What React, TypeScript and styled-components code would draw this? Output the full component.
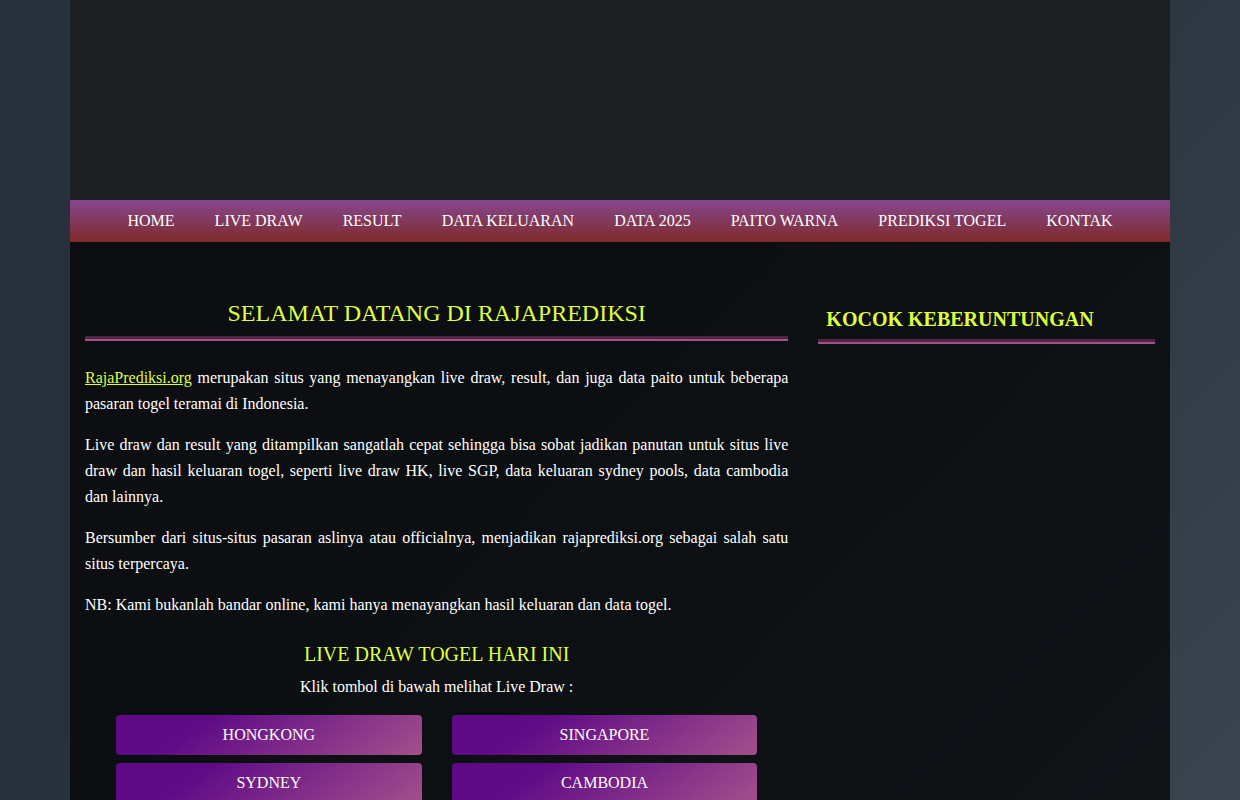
import React from "react";
import styled, { createGlobalStyle } from "styled-components";

const GlobalStyle = createGlobalStyle`
  * {
    box-sizing: border-box;
  }
  body {
    margin: 0;
    color: #fff;
    font: 16px/26px "Liberation Serif", "Times New Roman", serif;
    background: #28313b linear-gradient(315deg, #485461 0%, #28313b 74%) 0 0 / 100% 1800px no-repeat;
  }
`;

const Container = styled.div`
  max-width: 1100px;
  min-height: 100vh;
  margin: 0 auto;
  background: rgba(0, 0, 0, 0.7);
`;

const Banner = styled.header`
  height: 200px;
  background: #1b1f22;
`;

const Nav = styled.nav`
  background: linear-gradient(to bottom, #86478f, #7f2a28);
`;

const Menu = styled.ul`
  display: flex;
  flex-wrap: wrap;
  justify-content: center;
  margin: 0;
  padding: 0;
  list-style: none;
`;

const MenuLink = styled.a`
  display: block;
  padding: 8px 20px;
  color: #fff;
  text-decoration: none;
`;

const Columns = styled.div`
  display: grid;
  grid-template-columns: 2fr 1fr;

  @media (max-width: 767px) {
    grid-template-columns: 1fr;
  }
`;

const Main = styled.main`
  padding: 56px 15px 0;
`;

const Sidebar = styled.aside`
  padding: 65px 15px 0;
`;

const PageTitle = styled.h1`
  margin: 0 0 24px;
  padding-bottom: 8px;
  border-bottom: 5px groove #a4508b;
  color: #dfff3f;
  font-size: 24px;
  line-height: 30px;
  font-weight: 400;
  text-align: center;
`;

const SideTitle = styled.h2`
  margin: 0;
  padding: 0 8px 8px;
  border-bottom: 5px groove #a4508b;
  color: #dfff3f;
  font-size: 20px;
  line-height: 24px;
`;

const SectionTitle = styled.h2`
  margin: 24px 0 8px;
  color: #dfff3f;
  font-size: 20px;
  line-height: 24px;
  font-weight: 400;
  text-align: center;
`;

const Paragraph = styled.p`
  margin: 0 0 15px;
  text-align: justify;
`;

const Hint = styled.p`
  margin: 0 0 15px;
  text-align: center;
`;

const TextLink = styled.a`
  color: #dfff3f;
`;

const ButtonGrid = styled.div`
  display: grid;
  grid-template-columns: 1fr 1fr;
  gap: 8px 30px;
  padding: 0 31px;
`;

const DrawLink = styled.a`
  padding: 7px 12px;
  border-radius: 4px;
  background: linear-gradient(326deg, #a4508b 0%, #5f0a87 74%);
  color: #fff;
  text-align: center;
  text-decoration: none;
`;

const menu = [
  "HOME",
  "LIVE DRAW",
  "RESULT",
  "DATA KELUARAN",
  "DATA 2025",
  "PAITO WARNA",
  "PREDIKSI TOGEL",
  "KONTAK",
];

const draws = ["HONGKONG", "SINGAPORE", "SYDNEY", "CAMBODIA"];

export default function App() {
  return (
    <>
      <GlobalStyle />
      <Container>
        <Banner />
        <Nav>
          <Menu>
            {menu.map((item) => (
              <li key={item}>
                <MenuLink href="#">{item}</MenuLink>
              </li>
            ))}
          </Menu>
        </Nav>
        <Columns>
          <Main>
            <PageTitle>SELAMAT DATANG DI RAJAPREDIKSI</PageTitle>
            <Paragraph>
              <TextLink href="#">RajaPrediksi.org</TextLink> merupakan situs yang menayangkan live
              draw, result, dan juga data paito untuk beberapa pasaran togel teramai di Indonesia.
            </Paragraph>
            <Paragraph>
              Live draw dan result yang ditampilkan sangatlah cepat sehingga bisa sobat jadikan
              panutan untuk situs live draw dan hasil keluaran togel, seperti live draw HK, live
              SGP, data keluaran sydney pools, data cambodia dan lainnya.
            </Paragraph>
            <Paragraph>
              Bersumber dari situs-situs pasaran aslinya atau officialnya, menjadikan
              rajaprediksi.org sebagai salah satu situs terpercaya.
            </Paragraph>
            <Paragraph>
              NB: Kami bukanlah bandar online, kami hanya menayangkan hasil keluaran dan data
              togel.
            </Paragraph>
            <SectionTitle>LIVE DRAW TOGEL HARI INI</SectionTitle>
            <Hint>Klik tombol di bawah melihat Live Draw :</Hint>
            <ButtonGrid>
              {draws.map((name) => (
                <DrawLink key={name} href="#">
                  {name}
                </DrawLink>
              ))}
            </ButtonGrid>
          </Main>
          <Sidebar>
            <SideTitle>KOCOK KEBERUNTUNGAN</SideTitle>
          </Sidebar>
        </Columns>
      </Container>
    </>
  );
}
